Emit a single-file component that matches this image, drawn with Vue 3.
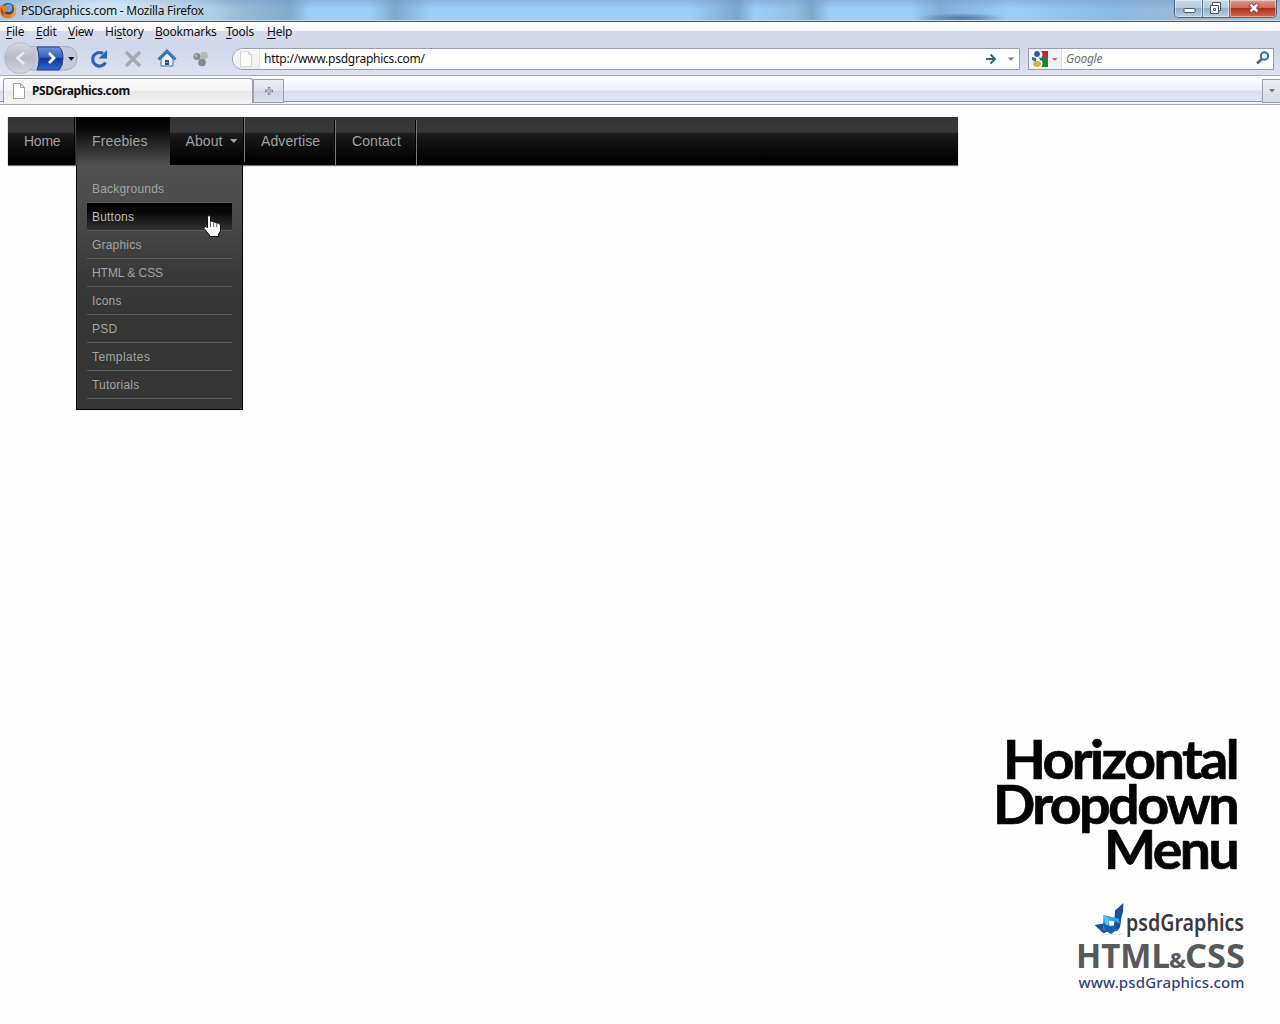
<script setup>
const menus = [['F', 'ile', 18, ''], ['E', 'dit', 20, ''], ['V', 'iew', 25, ''], ['s', 'tory', 38, 'Hi'], ['B', 'ookmarks', 59, ''], ['T', 'ools', 29, ''], ['H', 'elp', 25, '']]
const items = ['Backgrounds', 'Buttons', 'Graphics', 'HTML & CSS', 'Icons', 'PSD', 'Templates', 'Tutorials']
</script>

<template>
  <div class="window">
    <header class="titlebar">
      <svg class="firefox" width="17" height="18" viewBox="0 0 17 18">
        <circle cx="8" cy="9.5" r="7.5" fill="#274a86" />
        <circle cx="8.5" cy="7" r="4" fill="#6f9fce" />
        <path d="M1 3.500Q0 5 0 9q0 8 8 8.500q8-.5 8-8.500q0-4-3-6.500q2 3 1 6q-1 5-6 5q-3-.5-4-3q2 1 4-.5q-2-1-3-3l2-1q-1-2-3-1.500z" fill="#e8791c" />
        <path d="M13 3q4 4 2 9q-2 4-6 4.500q5-3 5.500-7z" fill="#f5b73a" />
        <path d="M1 6q-1 6 3 9l-1-5z" fill="#b6401a" />
      </svg>
      <span class="title">PSDGraphics.com - Mozilla Firefox</span>
      <div class="controls">
        <span class="ctl min"><svg width="14" height="16" viewBox="0 0 14 16"><rect x="2" y="8.500" width="11" height="4" rx=".5" fill="#fff" stroke="#4b5565" /></svg></span>
        <span class="ctl max"><svg width="14" height="16" viewBox="0 0 14 16"><path d="M3.500 2.500h8v8h-2v3h-8v-8h2z" fill="#fff" stroke="#4b5565" /><path d="M3.500 5.500h6v5M4.500 8.500h2v2h-2z" fill="none" stroke="#4b5565" /></svg></span>
        <span class="ctl close"><svg width="14" height="16" viewBox="0 0 14 16"><path d="M4 4l8 8M12 4l-8 8" stroke="#71302d" stroke-width="4.400" /><path d="M4.500 4.500l7 7M11.500 4.500l-7 7" stroke="#fff" stroke-width="2.600" /></svg></span>
      </div>
    </header>

    <section class="chrome">
      <nav class="menubar">
        <span v-for="m in menus" :key="m[1]" class="menu" :style="{ width: m[2] + 'px' }">{{ m[3] }}<u>{{ m[0] }}</u>{{ m[1] }}</span>
      </nav>
      <div class="toolbar">
        <svg class="history" width="80" height="32" viewBox="0 0 80 32">
          <defs>
            <linearGradient id="fwd" x2="0" y2="1"><stop stop-color="#6d96dc" /><stop offset=".45" stop-color="#3460bb" /><stop offset=".5" stop-color="#103896" /><stop offset="1" stop-color="#2c66d6" /></linearGradient>
            <linearGradient id="back" x2="0" y2="1"><stop stop-color="#d8dae1" /><stop offset=".5" stop-color="#b7bac5" /><stop offset="1" stop-color="#d4d8e2" /></linearGradient>
          </defs>
          <path d="M14 4.500h54q11 1 11 11.500T68 28H14z" fill="#c4cadb" stroke="#a4abc0" />
          <path d="M39 5h22q4 3 4 11t-4 12H39q4-11 0-23z" fill="url(#fwd)" stroke="#263f82" />
          <circle cx="22" cy="16" r="15.500" fill="url(#back)" stroke="#b9bdc9" />
          <path d="M26 10.500L19.500 16L26 22" fill="none" stroke="#e9ebf1" stroke-width="2.800" />
          <path d="M51 11l5 5l-5 5" fill="none" stroke="#fff" stroke-width="2.800" />
          <path d="M70 15h6.500l-3.250 3.800z" fill="#151922" />
        </svg>
        <svg class="tools" width="124" height="24" viewBox="0 0 124 24">
          <path d="M19.500 15.500A6.800 6.800 0 1 1 17 6.500" fill="none" stroke="#2a66b8" stroke-width="3.200" />
          <path d="M21 3v8.500h-8.500z" fill="#2a66b8" />
          <path d="M40 5l14 14M54 5L40 19" stroke="#a5a9b2" stroke-width="3.200" />
          <path d="M75 12v7h12v-7l-6-6z" fill="#e9f0fa" stroke="#4273b4" />
          <path d="M72.500 12.500L81 4l8.500 8.500" fill="none" stroke="#3f74bb" stroke-width="3" />
          <path d="M79 13h4v5h-4z" fill="#31547f" /><path d="M80.500 15h1v1h-1z" fill="#cfe0f3" />
          <circle cx="111" cy="9.500" r="3.600" fill="#888b8e" /><circle cx="118" cy="8.500" r="3.800" fill="#b5b8ba" /><circle cx="116" cy="15.500" r="3.800" fill="#858886" /><circle cx="110" cy="8.500" r="1.500" fill="#b4b6b8" />
        </svg>
        <div class="address">
          <span class="favicon"><svg width="14" height="16" viewBox="0 0 14 16"><path d="M1.500.5h8l3 3v12h-11z M9.500.5v3h3" fill="#fcfcfc" stroke="#d3d5d5" /></svg></span>
          <span class="url">http://www.psdgraphics.com/</span>
          <svg width="34" height="14" viewBox="0 0 34 14"><path d="M1 7h8.500M5.500 2.500L10 7l-4.500 4.500" fill="none" stroke="#34648e" stroke-width="2" /><path d="M23 5.500h6l-3 3.200z" fill="#777" /></svg>
        </div>
        <div class="search">
          <span class="engine"><svg width="30" height="17" viewBox="0 0 30 17">
            <path d="M8 0h8v6H8z" fill="#c7232b" /><path d="M8 6h8v10H8z" fill="#188536" />
            <path d="M0 0h8v16H0z" fill="#fff" /><circle cx="6.500" cy="3.500" r="4" fill="#fff" /><circle cx="5.500" cy="12.500" r="5" fill="#fff" />
            <circle cx="5" cy="3" r="2.900" fill="#2858a6" /><path d="M0 6l4 1v4l-4-2z" fill="#3565b0" /><path d="M7 6l3 2-2 2z" fill="#2858a6" /><ellipse cx="5" cy="13" rx="4" ry="2.900" fill="#dfb23c" />
            <path d="M20 7h5.500l-2.750 3z" fill="#8b7678" />
          </svg></span>
          <span class="hint">Google</span>
          <svg width="16" height="16" viewBox="0 0 16 16"><circle cx="10.500" cy="5" r="3.700" fill="none" stroke="#386a98" stroke-width="2" /><path d="M8 8L3 12.500" stroke="#386a98" stroke-width="2.700" /></svg>
        </div>
      </div>
    </section>

    <div class="tabs">
      <div class="tab"><svg width="14" height="16" viewBox="0 0 14 16"><path d="M1.500.5h7l4 4v11h-11z M8.500.5v4h4" fill="#fff" stroke="#a1a3a5" /></svg><b>PSDGraphics.com</b></div>
      <div class="newtab"><svg width="10" height="10" viewBox="0 0 10 10"><path d="M5 1v8M1 5h8" stroke="#80848e" stroke-width="2.400" /><path d="M5 2v6M2 5h6" stroke="#d5d7dd" /></svg></div>
      <div class="alltabs"><svg width="6" height="4" viewBox="0 0 6 4"><path d="M0 0h6L3 3.500z" fill="#747984" /></svg></div>
    </div>

    <main class="page">
      <nav class="nav">
        <a class="link home">Home</a>
        <div class="link active">Freebies
          <ul class="dropdown">
            <li v-for="i in items" :key="i" :class="{ hover: i === 'Buttons' }">{{ i }}</li>
          </ul>
          <svg class="pointer" width="20" height="25" viewBox="0 0 20 25"><path d="M4.500 2.500q1.500-2 3 0v5q1.500-1 2.500 .5q2-.5 3 1q3-.5 4.500 2v6l-2 3v2.500H6.500V21L1 14.500q-.5-2.500 2-2l1.500 1.500z" fill="#fff" stroke="#111" /><path d="M7.500 8v5M10.700 9v4M13.800 10v3" stroke="#333" stroke-width=".8" /></svg>
        </div>
        <a class="link about">About<svg width="8" height="5" viewBox="0 0 8 5"><path d="M0 0h7.500L3.750 4z" fill="#a3a3a3" /></svg></a>
        <a class="link adv">Advertise</a>
        <a class="link contact">Contact</a>
      </nav>

      <aside class="brand">
        <svg width="290" height="290" viewBox="980 720 290 290">
          <g class="headline">
            <text x="1003" y="779" textLength="234" lengthAdjust="spacingAndGlyphs">Horizontal</text>
            <text x="993" y="824" textLength="244" lengthAdjust="spacingAndGlyphs">Dropdown</text>
            <text x="1104" y="869" textLength="133" lengthAdjust="spacingAndGlyphs">Menu</text>
          </g>
          <path d="M1094.500 925l9-1.500 4 8-4 2z" fill="#1b549c" />
          <path d="M1103.500 915l5 3.500 1 8 5.500 4-4 3-8-3.500z" fill="#2d8fd0" />
          <path d="M1123.500 903l-8.500 7.500-1 16 2 5q4-2 4.500-7 .5-7 2.500-13z" fill="#174f99" />
          <path d="M1103.500 915l15 3.500 1.500 5-5-2-7.500-1z" fill="#37a3e0" />
          <path d="M1103 923.500l5 0 1 2.500 6-.5 3 3.500-7 5-6-3.500z" fill="#1a5fae" />
          <path d="M1103.500 915l5 3.500 0 7-3-1z" fill="#62c7ee" />
          <path d="M1101 935l22-1" stroke="#d5dae0" stroke-width=".8" />
          <text class="logo" x="1126" y="931" textLength="118" lengthAdjust="spacingAndGlyphs">psdGraphics</text>
          <text class="tech" x="1076" y="968" textLength="94" lengthAdjust="spacingAndGlyphs">HTML</text>
          <text class="amp" x="1169" y="968" textLength="17" lengthAdjust="spacingAndGlyphs">&amp;</text>
          <text class="tech" x="1185" y="968" textLength="60" lengthAdjust="spacingAndGlyphs">CSS</text>
          <text class="site" x="1078.500" y="988" textLength="166">www.psdGraphics.com</text>
        </svg>
      </aside>
    </main>
  </div>
</template>

<style>
body { margin: 0; background: #fefefe; }
</style>

<style scoped>
* { box-sizing: border-box; }
svg { display: block; flex: none; }
.window { width: 1280px; height: 1024px; overflow: hidden; display: flex; flex-direction: column; font: 12px/16px "Noto Sans", sans-serif; color: #111; background: #fefefe; }
.titlebar { height: 22px; flex: none; display: flex; border-bottom: 1px solid #435770; box-shadow: inset 0 -1px #c9dcec; background:
  radial-gradient(ellipse 130px 30px at 110px 10px, #d4e7f5e0 20%, #d4e7f500),
  linear-gradient(180deg, #7598cc80, #9bccf200 40%),
  radial-gradient(ellipse 45px 5px at 961px 18px, #5376a8, #5376a800),
  linear-gradient(90deg, #9fc3de 0, #a6c8e0 210px, #7daacd 290px, #9ccff8 310px, #9ccff8 370px, #7ba9cc 395px, #9ccff8 430px, #9ccff8 690px, #78a7cb 738px, #9ccff8 755px, #91c0e4 795px, #78a7cb 812px, #9ccff8 830px, #9ccff8 910px, #7caed6 940px, #9ccff8 1010px, #88bbe5 1110px, #9ab9d2 1180px, #a9c0d3); }
.firefox { margin-top: 1px; }
.title { margin: 3px 0 0 4px; letter-spacing: -.25px; white-space: nowrap; }
.controls { margin-left: auto; margin-right: 3px; width: 103px; height: 18px; display: flex; border: 1px solid #4b6178; border-top: 0; border-radius: 0 0 5px 5px; overflow: hidden; }
.ctl { display: flex; justify-content: center; box-shadow: inset 0 0 0 1px #ffffff70; background: linear-gradient(#c8d9e9, #b7cbdd 45%, #94aec6 50%, #b9cfe1); }
.min { width: 28px; border-right: 1px solid #60768e; }
.max { width: 27px; border-right: 1px solid #60768e; }
.close { flex: 1; background: linear-gradient(#dfa092, #ca6a5a 45%, #b22e1b 50%, #d26a4e); }
.chrome { height: 54px; flex: none; display: flex; flex-direction: column; border-bottom: 1px solid #a6abb7; background: linear-gradient(#fff, #f3f6fb 9px, #d7daeb 9px, #d0d7ea 25px, #dce0f0 50px, #dfe4f1); }
.menubar { height: 20px; display: flex; gap: 12px; padding: 2px 0 0 6px; }
.menu { white-space: nowrap; letter-spacing: -.25px; }
.menu u { text-underline-offset: 2px; text-decoration-thickness: 1px; }
.toolbar { height: 33px; display: flex; align-items: center; }
.history { align-self: flex-start; margin-left: -2px; }
.tools { margin-left: 8px; }
.address { width: 788px; height: 22px; margin-left: 22px; display: flex; align-items: center; background: #fff; border: 1px solid #999eaa; border-radius: 11px 0 0 11px; overflow: hidden; }
.favicon { width: 27px; height: 20px; padding: 2px 0 0 6px; background: linear-gradient(#f9f9f9, #eee); border-right: 1px solid #e5e5e5; }
.url { flex: 1; padding-left: 4px; letter-spacing: -.24px; }
.search { width: 246px; height: 22px; margin-left: 8px; display: flex; align-items: center; background: #fff; border: 1px solid #999eaa; }
.engine { width: 33px; height: 20px; padding: 2px 0 0 3px; background: #f2f2f4; border-right: 1px solid #ddd; }
.hint { flex: 1; padding-left: 4px; font-style: italic; color: #707070; letter-spacing: -.25px; }
.search > svg { margin-right: 3px; }
.tabs { height: 29px; flex: none; display: flex; align-items: flex-start; padding: 2px 0 0 3px; border-bottom: 1px solid #a7aab0; background: linear-gradient(#fff, #edf1fa 14px, #d9dded 15px, #e1e4f4 25px, #8f939f 25px, #8f939f 26px, #f3f3f4 26px); }
.tab { width: 250px; height: 25px; display: flex; align-items: center; border: 1px solid #9a9ea8; border-bottom: 0; border-radius: 3px 3px 0 0; padding-left: 8px; background: linear-gradient(#fbfbfb, #f4f4f4 50%, #e9e9e9 52%, #f3f3f3); }
.tab b { margin-left: 6px; font-size: 12px; letter-spacing: -.4px; }
.newtab { width: 31px; height: 24px; display: flex; align-items: center; justify-content: center; border: 1px solid #9a9ea8; background: linear-gradient(#eceef3, #dbdfe9 50%, #d0d4df 52%, #dde1eb); margin-top: 1px; }
.alltabs { width: 18px; height: 24px; margin: 1px 0 0 auto; display: flex; align-items: center; justify-content: center; border: 1px solid #9a9ea8; border-right: 0; background: linear-gradient(#eceef3, #d5d9e4); }
.page { flex: 1; display: flex; flex-direction: column; padding: 12px 10px 14px 8px; }
.nav { width: 950px; height: 48px; display: flex; color: #a0a2a0; font: 14px/48px "Liberation Sans", sans-serif; background: linear-gradient(#343434, #383838 15px, #222 16px, #171717 20px, #000 44px); box-shadow: 0 1px 1px #777; }
.link { height: 48px; padding-left: 16px; letter-spacing: .1px; background: linear-gradient(#777, #777) right 3px / 1px 45px no-repeat, linear-gradient(#000, #000) calc(100% - 1px) 3px / 1px 45px no-repeat; }
.home { width: 68px; letter-spacing: -.25px; background: linear-gradient(#555, #222) right 0 / 1px 48px no-repeat, linear-gradient(#000, #000) calc(100% - 1px) 0 / 1px 48px no-repeat; }
.active { width: 94px; position: relative; letter-spacing: .15px; background: linear-gradient(#000, #080808 12px, #505050); }
.about { width: 75px; padding-left: 15.5px; display: flex; align-items: center; background-position: right 0, calc(100% - 1px) 0; }
.about svg { margin-left: 7px; }
.adv { width: 91px; }
.contact { width: 81px; }
.dropdown { position: absolute; left: 0; top: 48px; width: 167px; height: 245px; margin: 0; padding: 10px 10px 0; list-style: none; border: 1px solid #000; border-top: 0; background: linear-gradient(#525252, #484848 60px, #393939 110px, #363636 150px); }
.dropdown li { height: 28px; padding-left: 5px; border-bottom: 1px solid #5b5f5c; font-size: 12px; line-height: 29px; letter-spacing: .2px; white-space: nowrap; }
.dropdown li:nth-child(4) { letter-spacing: -.05px; }
.dropdown li:nth-child(7) { letter-spacing: .4px; }
.dropdown li.hover { color: #bbb; background: linear-gradient(#000, #050505 8px, #333) padding-box; }
.pointer { position: absolute; left: 127px; top: 97px; }
.brand { margin-top: auto; align-self: flex-end; }
text { font-family: "Noto Sans", sans-serif; }
.headline text { font-family: Lato, "Noto Sans", sans-serif; font-size: 54px; font-weight: 700; letter-spacing: -2.5px; fill: #040404; stroke: #040404; stroke-width: .7px; }
.logo { font-size: 24px; font-weight: 600; fill: #3b3b3d; }
.tech { font-size: 34px; font-weight: 700; fill: #58595b; }
.amp { font-size: 22px; font-weight: 700; fill: #58595b; }
.site { font-size: 15px; font-weight: 500; fill: #343f80; }
</style>
